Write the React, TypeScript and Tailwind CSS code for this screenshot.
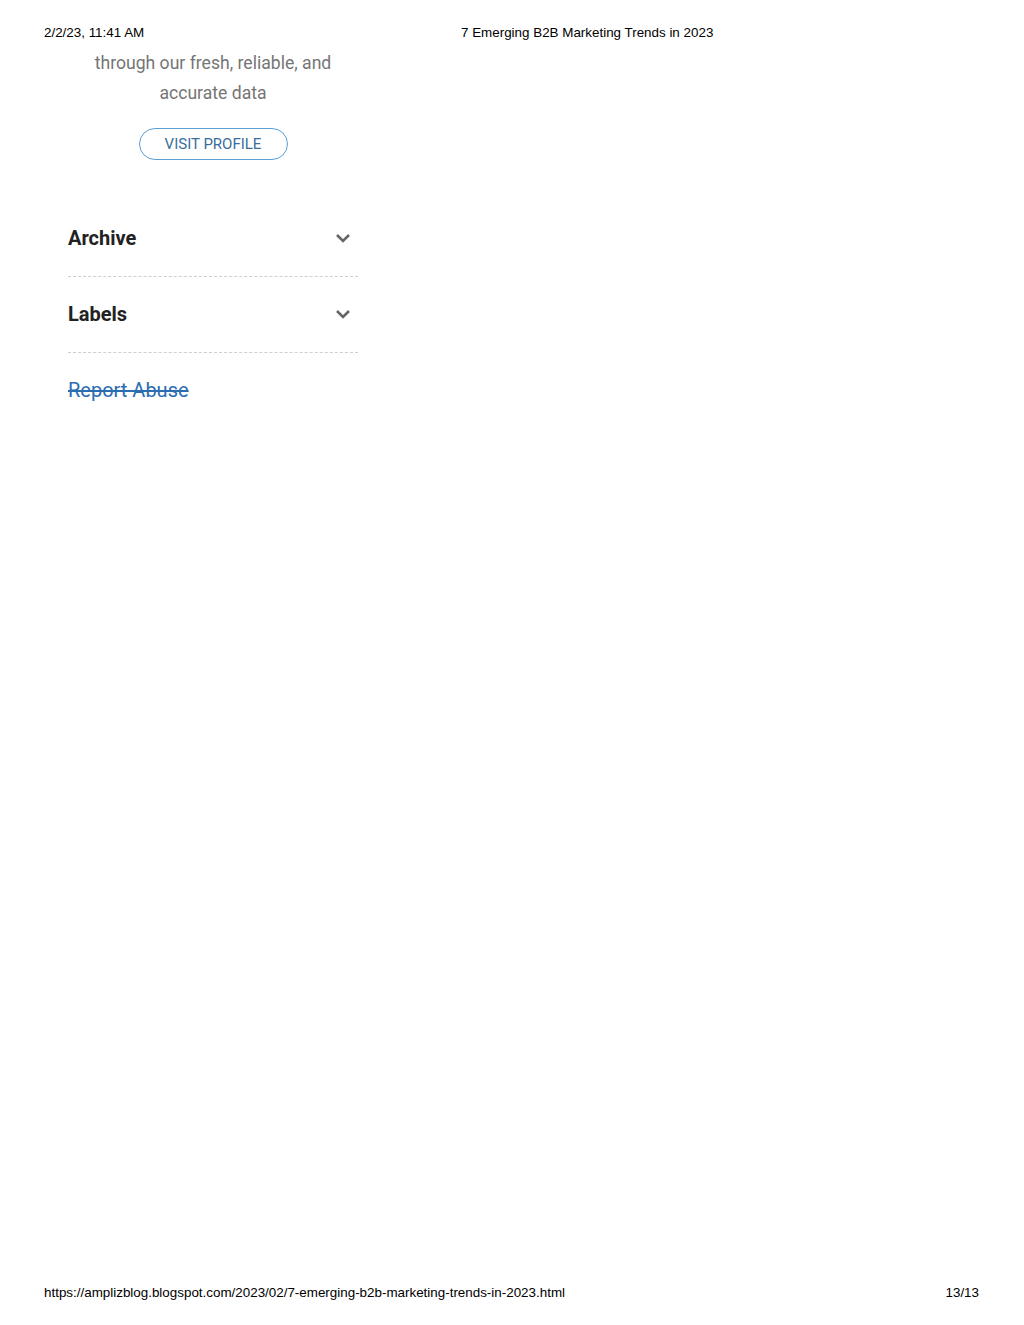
export default function App() {
  return (
    <div className="flex h-[1325px] w-full flex-col bg-white text-black">
      {/* Print header */}
      <header className="grid grid-cols-[417px_auto] px-[44px] pt-[25px] font-['Liberation_Sans',Arial,sans-serif] text-[13.4px] leading-[16px]">
        <span>2/2/23, 11:41 AM</span>
        <span>7 Emerging B2B Marketing Trends in 2023</span>
      </header>

      {/* Sidebar content */}
      <main className="flex-1 pl-[68px] font-['Roboto',sans-serif]">
        <div className="flex w-[290px] flex-col">
          <div className="mt-[7px] flex flex-col items-center">
            <p className="text-center text-[17.6px] leading-[30px] text-[#757575]">
              through our fresh, reliable, and
              <br />
              accurate data
            </p>
            <a
              href="#"
              className="mt-[20px] flex h-[32px] w-[149px] items-center justify-center rounded-full border border-[#5a9fd6] text-[15px] text-[#3b6d9c]"
            >
              VISIT PROFILE
            </a>
          </div>

          <div className="mt-[41px]">
            {["Archive", "Labels"].map((label) => (
              <div
                key={label}
                className="flex items-center justify-between border-b border-dashed border-[#cfcfcf] pt-[23px] pb-[24px]"
              >
                <h3 className="text-[20px] font-bold leading-[28px] text-[#222]">{label}</h3>
                <svg width="16" height="10" viewBox="0 0 16 10" className="mr-[7px]">
                  <path d="M2 2 L8 8 L14 2" fill="none" stroke="#666" strokeWidth="2.6" />
                </svg>
              </div>
            ))}
          </div>

          <a
            href="#"
            className="mt-[23px] text-[20px] leading-[28px] text-[#2a6db0] line-through"
          >
            Report Abuse
          </a>
        </div>
      </main>

      {/* Print footer */}
      <footer className="flex justify-between pl-[44px] pr-[45px] pb-[24px] font-['Liberation_Sans',Arial,sans-serif] text-[13.4px] leading-[16px]">
        <span>https://amplizblog.blogspot.com/2023/02/7-emerging-b2b-marketing-trends-in-2023.html</span>
        <span>13/13</span>
      </footer>
    </div>
  );
}
